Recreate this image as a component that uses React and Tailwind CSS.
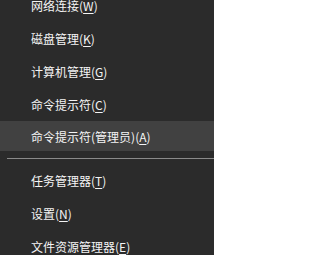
import React from 'react';

const groups = [
    [
        { label: '网络连接', key: 'W' },
        { label: '磁盘管理', key: 'K' },
        { label: '计算机管理', key: 'G' },
        { label: '命令提示符', key: 'C' },
        { label: '命令提示符(管理员)', key: 'A', active: true },
    ],
    [
        { label: '任务管理器', key: 'T' },
        { label: '设置', key: 'N' },
        { label: '文件资源管理器', key: 'E' },
    ],
];

const MenuItem = ({ label, accessKey, active }) => (
    <div className={active ? 'h-[30px] mb-[3px] pt-px flex items-center pl-[31px] bg-[#414141]' : 'h-[33px] flex items-center pl-[31px]'}>
        <span className="text-[12px] leading-none text-[#f4f4f4] whitespace-nowrap">
            {label}(<span className="underline underline-offset-2">{accessKey}</span>)
        </span>
    </div>
);

export default function App() {
    return (
        <div className="w-[214px] h-[255px] overflow-hidden bg-[#2b2b2b] select-none" style={{ fontFamily: '"Microsoft YaHei", "Noto Sans CJK SC", sans-serif' }}>
            <div className="-mt-[11px] flex flex-col">
                {groups.map((items, gi) => (
                    <React.Fragment key={gi}>
                        {gi > 0 && (
                            <div className="pt-[4px] pb-[5px] pl-[7px]">
                                <div className="h-px bg-[#8a8a8a]" />
                            </div>
                        )}
                        {items.map((it) => (
                            <MenuItem key={it.label} label={it.label} accessKey={it.key} active={it.active} />
                        ))}
                    </React.Fragment>
                ))}
            </div>
        </div>
    );
}
